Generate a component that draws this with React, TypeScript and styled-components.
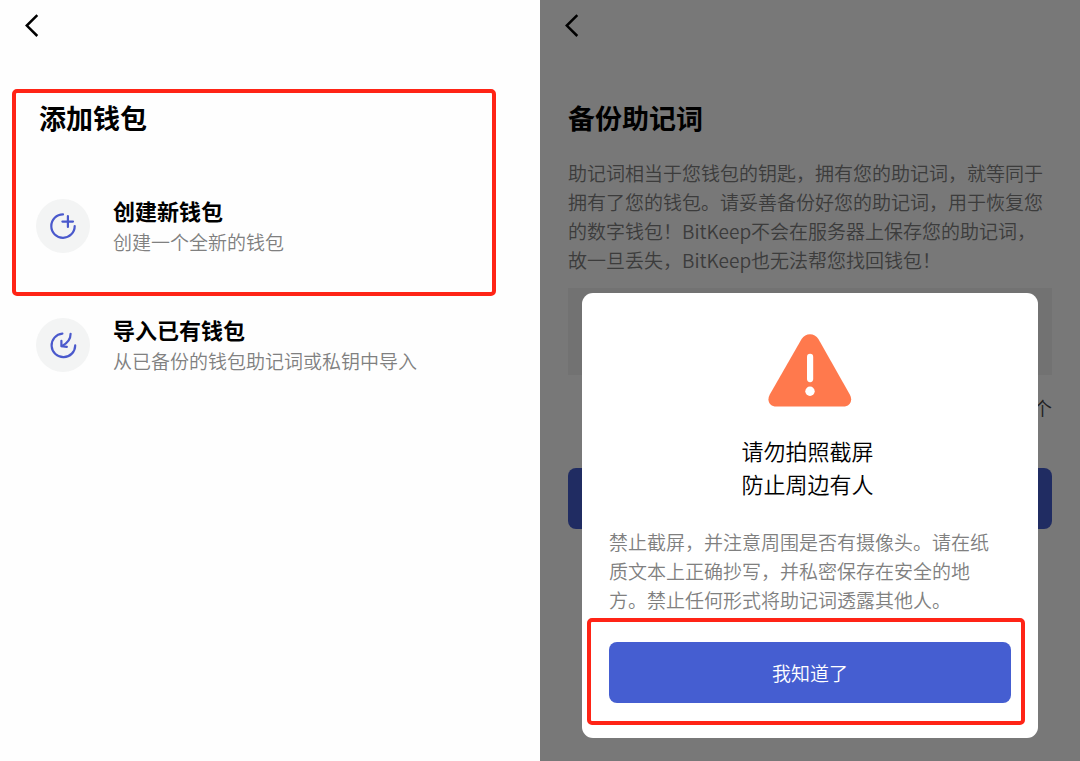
import React from "react";
import styled, { createGlobalStyle } from "styled-components";

const GlobalStyle = createGlobalStyle`
  *, *::before, *::after { box-sizing: border-box; }
  body {
    margin: 0;
    background: #fff;
    color: #000;
    font-family: "Noto Sans CJK SC", "Noto Sans", sans-serif;
  }
  h1, h2, p { margin: 0; }
  button { font: inherit; border: 0; padding: 0; cursor: pointer; }
`;

const Page = styled.div`
  display: grid;
  grid-template-columns: 1fr 1fr;
  min-height: 100vh;
`;

const Screen = styled.section`
  position: relative;
  display: flex;
  flex-direction: column;
  background: #fefefe;
`;

const TopBar = styled.header`
  display: flex;
  align-items: center;
  height: 51px;
  padding: 0 20px;
`;

const BackButton = styled.button`
  display: flex;
  background: none;
  color: #000;
`;

const Heading = styled.h1`
  font-size: 27px;
  font-weight: 700;
  line-height: 40px;
`;

const Highlight = styled.div`
  border: 4px solid #ff2416;
  border-radius: 5px;
`;

const CreateHighlight = styled(Highlight)`
  margin: 38px 44px 18px 12px;
  padding: 5px 20px 35px;

  ${Heading} {
    padding-left: 3px;
    margin-bottom: 57px;
  }
`;

const ImportArea = styled.div`
  padding: 0 36px;
`;

const Option = styled.button`
  display: flex;
  align-items: center;
  gap: 23px;
  width: 100%;
  background: none;
  color: #000;
  text-align: left;
`;

const OptionIcon = styled.svg`
  flex: none;
  width: 54px;
  height: 54px;
`;

const OptionText = styled.span`
  display: flex;
  flex-direction: column;
  gap: 2px;
`;

const OptionTitle = styled.span`
  font-size: 22px;
  font-weight: 700;
  line-height: 30px;
`;

const OptionNote = styled.span`
  font-size: 19px;
  font-weight: 350;
  line-height: 30px;
  color: #808080;
`;

const BackupBody = styled.div`
  display: flex;
  flex-direction: column;
  padding: 47px 28px 0;
`;

const Paragraph = styled.p`
  font-size: 19px;
  font-weight: 350;
  line-height: 29px;
  color: #808080;
  white-space: nowrap;
`;

const BackupText = styled(Paragraph)`
  margin-top: 20px;
`;

const PhraseCard = styled.div`
  height: 87px;
  margin-top: 14px;
  background: #f3f3f3;
`;

const Unit = styled.p`
  margin-top: 18px;
  font-size: 19px;
  font-weight: 350;
  line-height: 30px;
  text-align: right;
  color: #444;
`;

const PrimaryButton = styled.button`
  width: 100%;
  height: 61px;
  border-radius: 8px;
  background: #455ed1;
  color: #fff;
  font-size: 19px;
  font-weight: 350;
`;

const NextButton = styled(PrimaryButton)`
  margin-top: 45px;
`;

const Scrim = styled.div`
  position: absolute;
  inset: 0;
  display: flex;
  align-items: flex-end;
  padding: 0 42px 23px;
  background: rgba(0, 0, 0, 0.53);
`;

const Dialog = styled.div`
  display: flex;
  flex-direction: column;
  width: 100%;
  padding: 41px 13px 13px 5px;
  border-radius: 11px;
  background: #fff;
`;

const DialogContent = styled.div`
  display: flex;
  flex-direction: column;
  align-items: center;
  padding: 0 14px 4px 22px;

  ${Paragraph} {
    align-self: flex-start;
    margin-top: 27px;
  }
`;

const DialogTitle = styled.h2`
  margin-top: 27px;
  padding-right: 5px;
  font-size: 22px;
  font-weight: 350;
  line-height: 33px;
  text-align: center;
`;

const ConfirmHighlight = styled(Highlight)`
  padding: 20px 10px 18px 18px;
`;

const Back = () => (
  <BackButton type="button" aria-label="返回">
    <svg width="24" height="24" viewBox="0 0 24 24" fill="none" stroke="currentColor" strokeWidth="2.5">
      <path d="M17.3 1.2 6.8 11.6 17.3 22" />
    </svg>
  </BackButton>
);

const iconStroke = {
  fill: "none",
  stroke: "#4a59cc",
  strokeWidth: 2.2,
  strokeLinecap: "round" as const,
  strokeLinejoin: "round" as const,
};

const CreateIcon = () => (
  <OptionIcon viewBox="0 0 54 54" aria-hidden="true">
    <circle cx="27" cy="27" r="27" fill="#f3f4f4" />
    <g {...iconStroke}>
      <path d="M27 15.4A11.7 11.7 0 1 0 38.7 27" />
      <path d="M26.4 22.6H37M31.9 17.2V28" />
    </g>
  </OptionIcon>
);

const ImportIcon = () => (
  <OptionIcon viewBox="0 0 54 54" aria-hidden="true">
    <circle cx="27" cy="27" r="27" fill="#f3f4f4" />
    <g {...iconStroke}>
      <path d="M26.4 15.6A11.8 11.8 0 1 0 39.2 27.4" />
      <path d="M34.6 15.8C34.6 21.4 31.2 25.4 26 28" />
      <path d="M25.4 22.8V28.2L30.8 28.8" />
    </g>
  </OptionIcon>
);

const WarningIcon = () => (
  <svg width="84" height="73" viewBox="0 0 84 73" role="img" aria-label="警告">
    <path
      d="M33.6 5C37.4-1.4 46.6-1.4 50.4 5L81.8 60.4C85.2 66.4 81.9 72.6 75.2 72.6H8.4C1.7 72.6-1.6 66.4 1.8 60.4Z"
      fill="#ff794d"
    />
    <rect x="39" y="19.8" width="6.2" height="28.4" rx="3.1" fill="#fff" />
    <circle cx="42" cy="57.2" r="4.7" fill="#fff" />
  </svg>
);

export default function App() {
  return (
    <>
      <GlobalStyle />
      <Page>
        <Screen>
          <TopBar>
            <Back />
          </TopBar>
          <CreateHighlight>
            <Heading>添加钱包</Heading>
            <Option type="button">
              <CreateIcon />
              <OptionText>
                <OptionTitle>创建新钱包</OptionTitle>
                <OptionNote>创建一个全新的钱包</OptionNote>
              </OptionText>
            </Option>
          </CreateHighlight>
          <ImportArea>
            <Option type="button">
              <ImportIcon />
              <OptionText>
                <OptionTitle>导入已有钱包</OptionTitle>
                <OptionNote>从已备份的钱包助记词或私钥中导入</OptionNote>
              </OptionText>
            </Option>
          </ImportArea>
        </Screen>

        <Screen>
          <TopBar>
            <Back />
          </TopBar>
          <BackupBody>
            <Heading>备份助记词</Heading>
            <BackupText>
              助记词相当于您钱包的钥匙，拥有您的助记词，就等同于
              <br />
              拥有了您的钱包。请妥善备份好您的助记词，用于恢复您
              <br />
              的数字钱包！BitKeep不会在服务器上保存您的助记词，
              <br />
              故一旦丢失，BitKeep也无法帮您找回钱包！
            </BackupText>
            <PhraseCard />
            <Unit>个</Unit>
            <NextButton type="button" aria-label="下一步" />
          </BackupBody>
          <Scrim>
            <Dialog role="dialog" aria-modal="true" aria-labelledby="warning-title">
              <DialogContent>
                <WarningIcon />
                <DialogTitle id="warning-title">
                  请勿拍照截屏
                  <br />
                  防止周边有人
                </DialogTitle>
                <Paragraph>
                  禁止截屏，并注意周围是否有摄像头。请在纸
                  <br />
                  质文本上正确抄写，并私密保存在安全的地
                  <br />
                  方。禁止任何形式将助记词透露其他人。
                </Paragraph>
              </DialogContent>
              <ConfirmHighlight>
                <PrimaryButton type="button">我知道了</PrimaryButton>
              </ConfirmHighlight>
            </Dialog>
          </Scrim>
        </Screen>
      </Page>
    </>
  );
}
